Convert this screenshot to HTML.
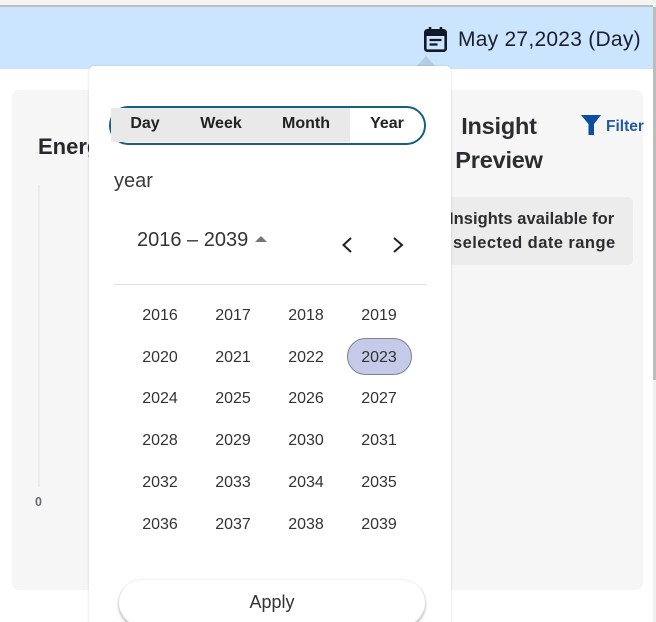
<!DOCTYPE html>
<html style="height:622px;overflow:hidden"><head><meta charset="utf-8"><style>
html,body{margin:0;padding:0;background:#fff}
body{width:656px;height:622px;overflow:hidden;font-family:"Liberation Sans",sans-serif;color:#333}
#r{position:relative;width:656px;height:622px;overflow:hidden;contain:paint}
#r div{position:absolute;box-sizing:border-box;white-space:nowrap}
.y{font-size:16px;color:#333;width:60px;text-align:center;line-height:20px}
.tab{font-size:16px;font-weight:bold;color:#222;line-height:20px;top:114px;text-align:center}
</style></head><body><div id="r">
<div style="left:0;top:0;width:656px;height:5px;background:#f4f4f4"></div>
<div style="left:0;top:5px;width:656px;height:2px;background:#bdbdbd"></div>
<div style="left:0;top:7px;width:653px;height:62px;background:#cce5ff"></div>
<svg style="position:absolute;left:423px;top:26px" width="26" height="28" viewBox="0 0 26 28"><path d="M7 1v4M18 1v4" stroke="#111827" stroke-width="2.600" fill="none"/><rect x="2.300" y="4.300" width="20.400" height="20.400" rx="2" fill="none" stroke="#111827" stroke-width="2.600"/><rect x="2" y="4" width="21" height="6" fill="#111827"/><path d="M6.500 14h12M6.500 18.500h8" stroke="#111827" stroke-width="2.200" fill="none"/></svg>
<div style="left:458px;top:27px;font-size:21px;line-height:26px;color:#1a1f2b;letter-spacing:.25px">May 27,2023 (Day)</div>
<div style="left:416px;top:56px;width:0;height:0;border-left:10px solid transparent;border-right:10px solid transparent;border-bottom:11px solid #b5cde3"></div>

<div style="left:12px;top:90px;width:631px;height:500px;background:#f6f6f7;border-radius:7px"></div>
<div style="left:38px;top:133px;font-size:22px;font-weight:bold;color:#26282c;line-height:28px">Energy</div>
<div style="left:38px;top:185px;width:2px;height:302px;background:#ececee"></div>
<div style="left:35px;top:495px;font-size:12.500px;font-weight:bold;color:#6b6b70;line-height:15px">0</div>

<div style="left:451px;top:109px;width:96px;text-align:center;font-size:23.500px;font-weight:bold;color:#2b2d31;line-height:34px;white-space:normal;letter-spacing:-.2px">Insight Preview</div>
<svg style="position:absolute;left:580px;top:114px" width="22" height="22" viewBox="0 0 22 22"><path d="M1 1H21L14 10V21H8.500V10Z" fill="#0b4ea2"/></svg>
<div style="left:606px;top:118px;font-size:15.500px;font-weight:bold;color:#1e5aa8;line-height:18px">Filter</div>
<div style="left:430px;top:197px;width:203px;height:68px;background:#ececec;border-radius:5px"></div>
<div style="left:449px;top:207px;font-size:16.500px;font-weight:bold;color:#2b2d31;line-height:24px;letter-spacing:.05px">Insights available for</div>
<div style="left:453px;top:231px;font-size:16.500px;font-weight:bold;color:#2b2d31;line-height:24px;letter-spacing:.45px">selected date range</div>

<div style="left:89px;top:66px;width:362px;height:570px;background:#fff;border-radius:5px;box-shadow:0 0 2px rgba(0,0,0,.16)"></div>

<div style="left:109px;top:106px;width:317px;height:39px;border:2px solid #155f85;border-radius:20px;background:#fff"></div>
<div style="left:111px;top:108px;width:239px;height:34px;background:#e9e9e9"></div>
<div class="tab" style="left:125px;width:40px">Day</div>
<div class="tab" style="left:195px;width:52px">Week</div>
<div class="tab" style="left:276px;width:60px">Month</div>
<div class="tab" style="left:365px;width:44px">Year</div>
<div style="left:114px;top:169px;font-size:20px;line-height:24px;color:#3a3a3a">year</div>

<div style="left:137px;top:227px;font-size:20px;line-height:26px;color:#333">2016 – 2039</div>
<div style="left:255px;top:236px;width:0;height:0;border-left:6px solid transparent;border-right:6px solid transparent;border-top:0;border-bottom:6px solid #757575"></div>
<svg style="position:absolute;left:340px;top:236px" width="66" height="18" viewBox="0 0 66 18"><path d="M11 2L3.500 9L11 16" fill="none" stroke="#222" stroke-width="2"/><path d="M54 2L62 9L54 16" fill="none" stroke="#222" stroke-width="2"/></svg>
<div style="left:114px;top:284px;width:312px;height:1px;background:#e0e0e0"></div>

<div style="left:347px;top:338px;width:65px;height:37px;border-radius:19px;background:#c5cae9;border:1px solid #7d7f94"></div>

<div class="y" style="left:130px;top:306px">2016</div><div class="y" style="left:203px;top:306px">2017</div><div class="y" style="left:276px;top:306px">2018</div><div class="y" style="left:349px;top:306px">2019</div>
<div class="y" style="left:130px;top:348px">2020</div><div class="y" style="left:203px;top:348px">2021</div><div class="y" style="left:276px;top:348px">2022</div><div class="y" style="left:349px;top:348px">2023</div>
<div class="y" style="left:130px;top:389px">2024</div><div class="y" style="left:203px;top:389px">2025</div><div class="y" style="left:276px;top:389px">2026</div><div class="y" style="left:349px;top:389px">2027</div>
<div class="y" style="left:130px;top:431px">2028</div><div class="y" style="left:203px;top:431px">2029</div><div class="y" style="left:276px;top:431px">2030</div><div class="y" style="left:349px;top:431px">2031</div>
<div class="y" style="left:130px;top:473px">2032</div><div class="y" style="left:203px;top:473px">2033</div><div class="y" style="left:276px;top:473px">2034</div><div class="y" style="left:349px;top:473px">2035</div>
<div class="y" style="left:130px;top:515px">2036</div><div class="y" style="left:203px;top:515px">2037</div><div class="y" style="left:276px;top:515px">2038</div><div class="y" style="left:349px;top:515px">2039</div>

<div style="left:119px;top:580px;width:306px;height:46px;border-radius:23px;background:#fff;box-shadow:0 2px 3px rgba(0,0,0,.3),0 0 2px rgba(0,0,0,.1)"></div>
<div style="left:119px;top:591px;width:306px;text-align:center;font-size:18px;line-height:22px;color:#333">Apply</div>

<div style="left:653px;top:0;width:3px;height:622px;background:#f0f0f0"></div>
<div style="left:653px;top:7px;width:3px;height:373px;background:#bdbdbd"></div>
</div></body></html>
